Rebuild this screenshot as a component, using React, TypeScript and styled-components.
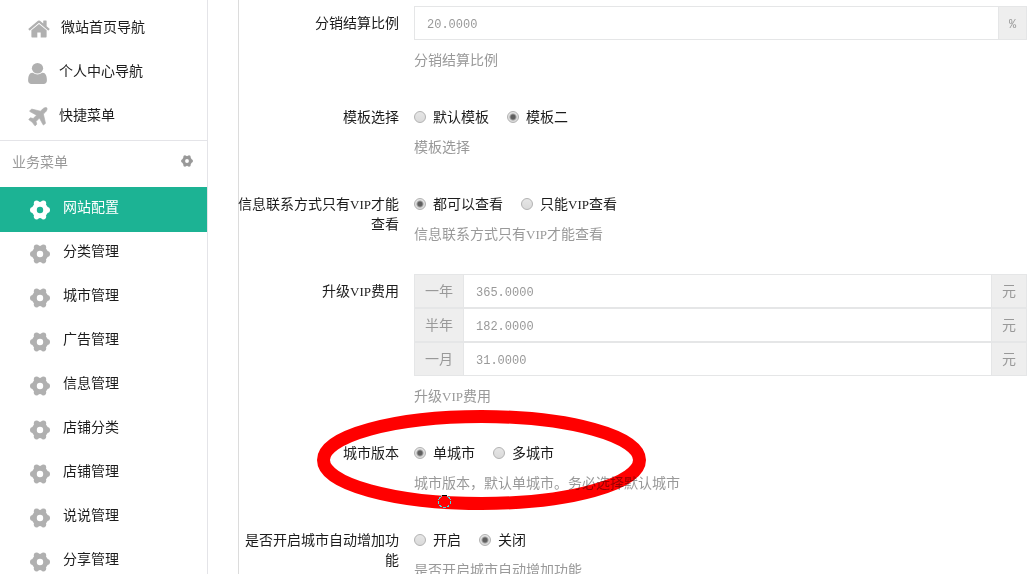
import React from "react";
import styled, { createGlobalStyle } from "styled-components";

const GlobalStyle = createGlobalStyle`
  * { box-sizing: border-box; }
  body {
    margin: 0;
    background: #fff;
    color: #1c1c1c;
    font: 14px/20px "Noto Sans CJK SC", sans-serif;
  }
`;

const Page = styled.div`
  display: flex;
  height: 100vh;
  overflow: hidden;
`;

const Sidebar = styled.nav`
  flex: 0 0 208px;
  border-right: 1px solid #e4e4e8;
  padding-top: 7px;
`;

const MenuList = styled.ul`
  list-style: none;
  margin: 0;
  padding: 0;
`;

const MenuLink = styled.a<{ $active?: boolean; $icon: number; $gap: number; $indent: number; $drop: number }>`
  display: flex;
  align-items: flex-start;
  gap: ${(p) => p.$gap}px;
  height: ${(p) => (p.$active ? 45 : 44)}px;
  margin-bottom: ${(p) => (p.$active ? -1 : 0)}px;
  padding: 9px 0 0 ${(p) => p.$indent}px;
  color: ${(p) => (p.$active ? "#fff" : "#1c1c1c")};
  background: ${(p) => (p.$active ? "#1cb394" : "transparent")};
  text-decoration: none;

  svg {
    flex: none;
    width: ${(p) => p.$icon}px;
    height: ${(p) => p.$icon}px;
    margin-top: ${(p) => p.$drop}px;
    color: ${(p) => (p.$active ? "#fff" : "#b0b0b0")};
    fill: currentColor;
  }
`;

const MenuHeader = styled.div`
  display: flex;
  justify-content: space-between;
  height: 47px;
  margin-top: 1px;
  padding: 10px 14px 0 12px;
  border-top: 1px solid #e4e4e8;
  color: #999;
`;

const HeaderButton = styled.button`
  width: 12px;
  height: 12px;
  margin-top: 4px;
  padding: 0;
  border: 0;
  background: none;
  color: #999;

  svg {
    display: block;
    width: 12px;
    height: 12px;
    fill: currentColor;
  }
`;

const Main = styled.main`
  flex: 1;
  min-width: 0;
  margin-left: 30px;
  border-left: 1px solid #dcdcdc;
`;

const Form = styled.form`
  display: flex;
  flex-direction: column;
  gap: 31px;
  padding-top: 6px;
`;

const Group = styled.div`
  position: relative;
  display: grid;
  grid-template-columns: 160px minmax(0, 1fr);
  column-gap: 15px;
`;

const GroupLabel = styled.label`
  display: flex;
  flex-direction: column;
  align-items: flex-end;
  padding-top: 6px;
  white-space: nowrap;
`;

const Help = styled.p`
  margin: 9px 0 0;
  color: #999;
`;

const Latin = styled.span`
  font: 13px/1 "Liberation Serif", serif;
`;

const RadioRow = styled.div`
  display: flex;
  gap: 18px;
  height: 27px;
  padding-top: 6px;
`;

const RadioLabel = styled.label`
  display: flex;
  align-items: center;
  gap: 7px;
  height: 20px;
`;

const Radio = styled.input`
  appearance: none;
  width: 12px;
  height: 12px;
  margin: 2px 0 0;
  border: 1px solid #b2b2b2;
  border-radius: 50%;
  background: linear-gradient(#e6e6e6, #dadada);

  &:checked {
    background: radial-gradient(circle, #5f5f5f 0 2px, transparent 4px), linear-gradient(#e6e6e6, #dadada);
  }
`;

const InputGroup = styled.div`
  display: flex;
  height: 34px;
  border: 1px solid #e5e6e7;
`;

const Addon = styled.span<{ $width: number; $side: "left" | "right" }>`
  flex: 0 0 ${(p) => p.$width}px;
  padding: 5px 0;
  border-${(p) => (p.$side === "left" ? "right" : "left")}: 1px solid #e5e6e7;
  background: #eee;
  color: #999;
  text-align: center;
`;

const Percent = styled.span`
  font: 12px/20px "Liberation Mono", monospace;
`;

const TextInput = styled.input`
  flex: 1;
  min-width: 0;
  padding: 3px 12px 0;
  border: 0;
  outline: 0;
  background: #fff;
  color: #999;
  font: 12px/20px "Liberation Mono", monospace;
`;

const Ring = styled.svg`
  position: absolute;
  top: -26px;
  left: 78px;
  width: 329px;
  height: 100px;
  pointer-events: none;
  mix-blend-mode: multiply;
`;

const BrushCursor = styled.svg`
  position: absolute;
  top: 59px;
  left: 199px;
  width: 13px;
  height: 13px;
  pointer-events: none;
`;

const HomeIcon = () => (
  <svg viewBox="64 192 1664 1408" aria-hidden="true">
    <path d="M1472 992v480q0 26-19 45t-45 19h-384v-384h-256v384h-384q-26 0-45-19t-19-45v-480q0-1 .5-3t.5-3l575-474 575 474q1 2 1 6zm223-69l-62 74q-8 9-21 11h-3q-13 0-21-7l-692-577-692 577q-12 8-24 7-13-2-21-11l-62-74q-8-10-7-23.5t11-21.5l719-599q32-26 76-26t76 26l244 204v-195q0-14 9-23t23-9h192q14 0 23 9t9 23v408l219 182q10 8 11 21.5t-7 23.5z" />
  </svg>
);

const UserIcon = () => (
  <svg viewBox="180 128 1432 1536" preserveAspectRatio="none" aria-hidden="true">
    <path d="M1536 1399q0 109-62.5 187t-150.5 78h-854q-88 0-150.5-78t-62.5-187q0-85 8.5-160.5t31.5-152 58.5-131 94-89 134.5-34.5q131 128 313 128t313-128q76 0 134.5 34.5t94 89 58.5 131 31.5 152 8.5 160.5z" />
    <circle cx="896" cy="512" r="384" />
  </svg>
);

const PlaneIcon = () => (
  <svg viewBox="128 96 1536 1536" aria-hidden="true">
    <path
      stroke="currentColor"
      strokeWidth="50"
      d="M1568 160q44 52 12 148t-108 172l-161 161 160 696q5 19-12 33l-128 96q-7 6-19 6-4 0-7-1-15-3-21-16l-279-508-259 259 53 194q5 17-8 31l-96 96q-9 9-23 9h-2q-15-2-24-13l-189-252-252-189q-11-7-13-23-1-13 9-25l96-97q9-9 23-9 6 0 8 1l194 53 259-259-508-279q-14-8-17-24-2-16 9-27l128-128q14-13 30-8l665 159 160-160q76-76 172-108t148 12z"
    />
  </svg>
);

const GearIcon = () => (
  <svg viewBox="0 0 20 20" aria-hidden="true">
    <circle cx="10" cy="10" r="5.7" fill="none" stroke="currentColor" strokeWidth="5" />
    <circle cx="17" cy="10" r="3" />
    <circle cx="3" cy="10" r="3" />
    <circle cx="13.4" cy="3.4" r="2.8" />
    <circle cx="6.6" cy="3.4" r="2.8" />
    <circle cx="13.4" cy="16.6" r="2.8" />
    <circle cx="6.6" cy="16.6" r="2.8" />
  </svg>
);

const shortcuts = [
  { text: "微站首页导航", Icon: HomeIcon, icon: 22, gap: 11, indent: 28, drop: 2 },
  { text: "个人中心导航", Icon: UserIcon, icon: 21, gap: 11, indent: 27, drop: 3 },
  { text: "快捷菜单", Icon: PlaneIcon, icon: 20, gap: 11, indent: 28, drop: 3 },
];

const business = [
  "网站配置",
  "分类管理",
  "城市管理",
  "广告管理",
  "信息管理",
  "店铺分类",
  "店铺管理",
  "说说管理",
  "分享管理",
];

const fees = [
  { id: "year", text: "一年", value: "365.0000" },
  { id: "half", text: "半年", value: "182.0000" },
  { id: "month", text: "一月", value: "31.0000" },
];

type RadioGroupProps = {
  name: string;
  label: React.ReactNode[];
  options: React.ReactNode[];
  selected: number;
  help: React.ReactNode;
  children?: React.ReactNode;
};

const RadioGroup = ({ name, label, options, selected, help, children }: RadioGroupProps) => (
  <Group role="radiogroup" aria-labelledby={`${name}-label`}>
    <GroupLabel as="div" id={`${name}-label`}>
      {label.map((line, i) => (
        <span key={i}>{line}</span>
      ))}
    </GroupLabel>
    <div>
      <RadioRow>
        {options.map((option, i) => (
          <RadioLabel key={i}>
            <Radio type="radio" name={name} defaultChecked={i === selected} />
            <span>{option}</span>
          </RadioLabel>
        ))}
      </RadioRow>
      <Help>{help}</Help>
    </div>
    {children}
  </Group>
);

const Vip = () => <Latin>VIP</Latin>;

export default function App() {
  return (
    <>
      <GlobalStyle />
      <Page>
        <Sidebar>
          <MenuList>
            {shortcuts.map(({ text, Icon, icon, gap, indent, drop }) => (
              <li key={text}>
                <MenuLink href="#" $icon={icon} $gap={gap} $indent={indent} $drop={drop}>
                  <Icon />
                  {text}
                </MenuLink>
              </li>
            ))}
          </MenuList>
          <MenuHeader>
            业务菜单
            <HeaderButton type="button" aria-label="设置">
              <GearIcon />
            </HeaderButton>
          </MenuHeader>
          <MenuList>
            {business.map((text, i) => (
              <li key={text}>
                <MenuLink href="#" $active={i === 0} $icon={20} $gap={13} $indent={30} $drop={4}>
                  <GearIcon />
                  {text}
                </MenuLink>
              </li>
            ))}
          </MenuList>
        </Sidebar>
        <Main>
          <Form>
            <Group>
              <GroupLabel htmlFor="ratio">分销结算比例</GroupLabel>
              <div>
                <InputGroup>
                  <TextInput id="ratio" type="text" defaultValue="20.0000" />
                  <Addon $width={28} $side="right">
                    <Percent>%</Percent>
                  </Addon>
                </InputGroup>
                <Help>分销结算比例</Help>
              </div>
            </Group>
            <RadioGroup
              name="template"
              label={["模板选择"]}
              options={["默认模板", "模板二"]}
              selected={1}
              help="模板选择"
            />
            <RadioGroup
              name="contact"
              label={[<>信息联系方式只有<Vip />才能</>, "查看"]}
              options={["都可以查看", <>只能<Vip />查看</>]}
              selected={0}
              help={<>信息联系方式只有<Vip />才能查看</>}
            />
            <Group>
              <GroupLabel htmlFor="year">
                <span>升级<Vip />费用</span>
              </GroupLabel>
              <div>
                {fees.map((fee) => (
                  <InputGroup key={fee.id}>
                    <Addon as="label" htmlFor={fee.id} $width={49} $side="left">
                      {fee.text}
                    </Addon>
                    <TextInput id={fee.id} type="text" defaultValue={fee.value} />
                    <Addon $width={35} $side="right">元</Addon>
                  </InputGroup>
                ))}
                <Help>升级<Vip />费用</Help>
              </div>
            </Group>
            <RadioGroup
              name="city"
              label={["城市版本"]}
              options={["单城市", "多城市"]}
              selected={0}
              help="城市版本，默认单城市。务必选择默认城市"
            >
              <Ring viewBox="0 0 329 100" aria-hidden="true">
                <ellipse cx="164.5" cy="50" rx="158" ry="43.5" fill="none" stroke="#f00" strokeWidth="13" />
              </Ring>
              <BrushCursor viewBox="0 0 13 13" aria-hidden="true" shapeRendering="crispEdges">
                <circle cx="6.5" cy="6.5" r="6" fill="none" stroke="#4dd" strokeDasharray="3 1" />
                <path d="M4 .5h5" stroke="#000" />
              </BrushCursor>
            </RadioGroup>
            <RadioGroup
              name="auto"
              label={["是否开启城市自动增加功", "能"]}
              options={["开启", "关闭"]}
              selected={1}
              help="是否开启城市自动增加功能"
            />
          </Form>
        </Main>
      </Page>
    </>
  );
}
